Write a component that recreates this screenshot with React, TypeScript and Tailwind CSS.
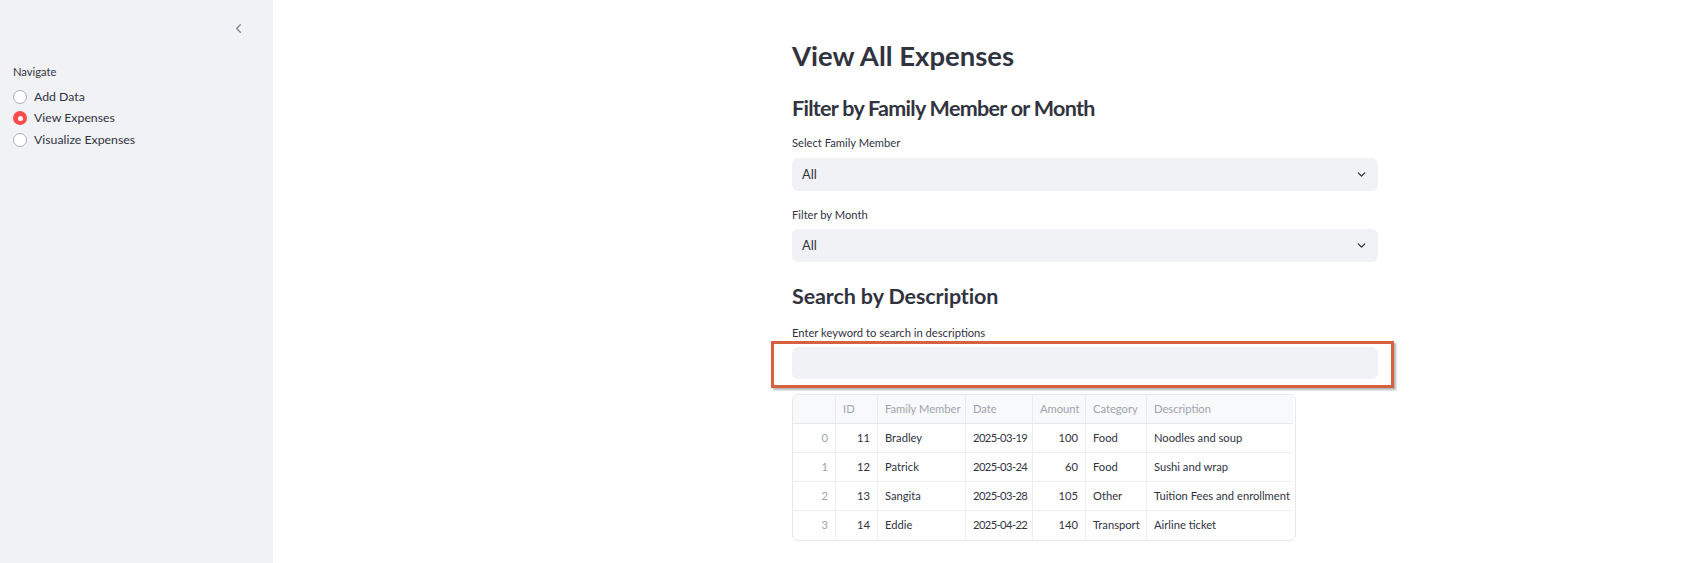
import { ChevronLeft, ChevronDown } from "lucide-react";

const font = { fontFamily: "Lato, 'Liberation Sans', sans-serif" };

const columns = [
  { key: "idx", label: "", w: "w-[43px]", num: true },
  { key: "id", label: "ID", w: "w-[42px]", num: true },
  { key: "member", label: "Family Member", w: "w-[88px]", num: false },
  { key: "date", label: "Date", w: "w-[67px]", num: false },
  { key: "amount", label: "Amount", w: "w-[53px]", num: true },
  { key: "category", label: "Category", w: "w-[61px]", num: false },
  { key: "desc", label: "Description", w: "w-[146px]", num: false },
];

const rows = [
  ["0", "11", "Bradley", "2025-03-19", "100", "Food", "Noodles and soup"],
  ["1", "12", "Patrick", "2025-03-24", "60", "Food", "Sushi and wrap"],
  ["2", "13", "Sangita", "2025-03-28", "105", "Other", "Tuition Fees and enrollment"],
  ["3", "14", "Eddie", "2025-04-22", "140", "Transport", "Airline ticket"],
];

function Radio({ label, checked }: { label: string; checked?: boolean }) {
  return (
    <div className="flex items-center h-[21.5px]">
      {checked ? (
        <span className="ml-[13px] w-[14px] h-[14px] rounded-full bg-[#ff4b4b] flex items-center justify-center">
          <span className="w-[5px] h-[5px] rounded-full bg-white" />
        </span>
      ) : (
        <span className="ml-[13px] w-[14px] h-[14px] rounded-full border border-[#a9adb8] bg-white" />
      )}
      <span className="ml-[7px] text-[12.3px] text-[#31333f]">{label}</span>
    </div>
  );
}

function Select({ value }: { value: string }) {
  return (
    <div className="h-[33px] rounded-[6px] bg-[#f0f2f6] flex items-center justify-between pl-[10px] pr-[10px]">
      <span className="text-[12.8px] text-[#31333f]">{value}</span>
      <ChevronDown className="w-[13px] h-[13px] text-[#31333f]" strokeWidth={2.5} />
    </div>
  );
}

export default function App() {
  return (
    <div className="flex w-[1695px] h-[563px] bg-white overflow-hidden" style={font}>
      {/* Sidebar */}
      <aside className="w-[273px] shrink-0 h-full bg-[#f0f2f6]">
        <div className="flex justify-end pr-[27px] pt-[21px]">
          <ChevronLeft className="w-[15px] h-[15px] text-[#808495]" strokeWidth={2} />
        </div>
        <div className="mt-[28px] pl-[13px] text-[11.2px] text-[#31333f] leading-[16px]">Navigate</div>
        <div className="mt-[6px] flex flex-col">
          <Radio label="Add Data" />
          <Radio label="View Expenses" checked />
          <Radio label="Visualize Expenses" />
        </div>
      </aside>

      {/* Main */}
      <main className="flex-1 h-full">
        <div className="ml-[519px] w-[586px] pt-[35px] text-[#31333f]">
          <h1 className="text-[27.5px] font-bold leading-[42px]">View All Expenses</h1>
          <h2 className="mt-[14px] text-[21.5px] font-bold leading-[34px] tracking-[-0.7px]">Filter by Family Member or Month</h2>

          <div className="mt-[10px] text-[11.2px] leading-[16px]">Select Family Member</div>
          <div className="mt-[7px]">
            <Select value="All" />
          </div>

          <div className="mt-[16px] text-[11.2px] leading-[16px]">Filter by Month</div>
          <div className="mt-[6px]">
            <Select value="All" />
          </div>

          <h2 className="mt-[17px] text-[21.5px] font-bold leading-[34px] tracking-[-0.1px]">Search by Description</h2>
          <div className="mt-[12px] text-[11.2px] leading-[16px]">Enter keyword to search in descriptions</div>

          <div className="mt-[6px] relative">
            <div className="h-[32px] rounded-[6px] bg-[#f0f2f6]" />
            <div className="absolute -left-[21px] -top-[6px] -right-[16px] -bottom-[9px] border-[3px] border-[#d6603f] shadow-[2px_2px_2px_rgba(0,0,0,0.3)] pointer-events-none" />
          </div>

          {/* Table */}
          <div className="mt-[15px] w-[504px] border border-[#e6e8ee] rounded-[6px] overflow-hidden text-[11.2px]">
            <div className="flex h-[29px] bg-[#f8f9fb] border-b border-[#e6e8ee] w-[500px]">
              {columns.map((c, i) => (
                <div
                  key={c.key}
                  className={`${c.w} h-full flex items-center px-[7px] whitespace-nowrap text-[#a0a3ad] ${i < columns.length - 1 ? "border-r border-[#e9ebef]" : ""}`}
                >
                  {c.label}
                </div>
              ))}
            </div>
            {rows.map((r, ri) => (
              <div
                key={ri}
                className={`flex h-[29px] w-[500px] ${ri < rows.length - 1 ? "border-b border-[#eceef2]" : ""}`}
              >
                {r.map((v, ci) => {
                  const c = columns[ci];
                  return (
                    <div
                      key={ci}
                      className={`${c.w} h-full flex items-center px-[7px] whitespace-nowrap overflow-hidden ${c.num ? "justify-end" : ""} ${c.key === "date" ? "tracking-[-0.6px]" : ""} ${ci === 0 ? "text-[#a0a3ad]" : "text-[#31333f]"} ${ci < r.length - 1 ? "border-r border-[#eceef2]" : ""}`}
                    >
                      {v}
                    </div>
                  );
                })}
              </div>
            ))}
          </div>
        </div>
      </main>
    </div>
  );
}
